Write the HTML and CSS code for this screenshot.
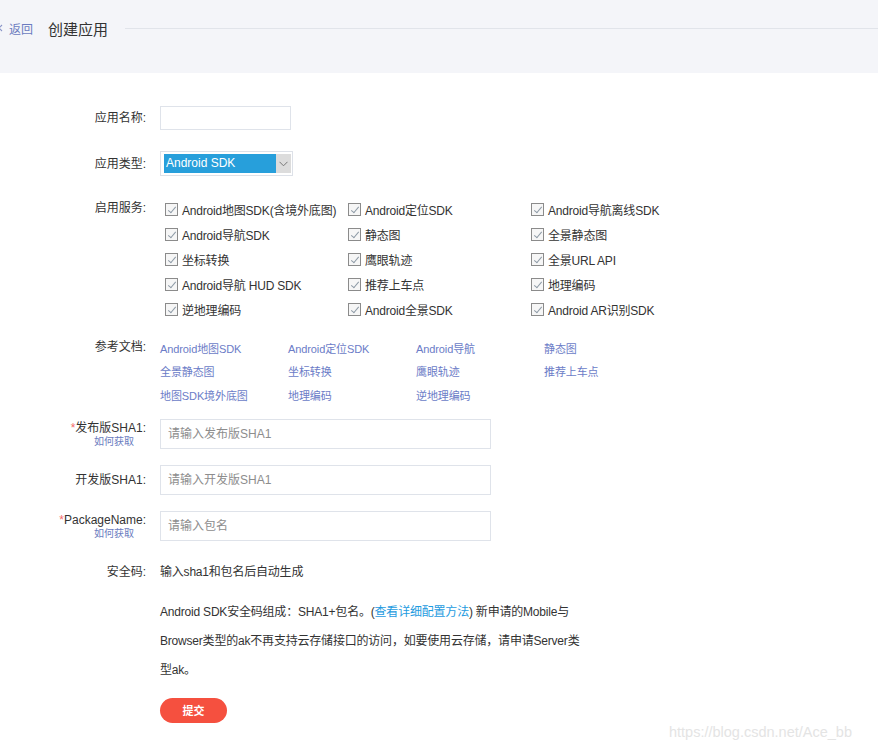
FILE: index.html
```html
<!DOCTYPE html>
<html lang="zh-CN">
<head>
<meta charset="utf-8">
<title>创建应用</title>
<link rel="stylesheet" href="styles.css">
</head>
<body>
<div class="top">
  <div class="crumb">
    <svg class="back-ico" width="3" height="10" viewBox="0 0 3 10"><path d="M2 2 L-1 5 L2 8" fill="none" stroke="#8a95c8" stroke-width="1.1"/></svg>
    <a class="back">返回</a>
    <h1 class="title">创建应用</h1>
    <div class="rule"></div>
  </div>
</div>

<form class="form">
  <div class="row r-name">
    <div class="lbl">应用名称:</div>
    <div class="field"><input class="txt txt-s" type="text"></div>
  </div>

  <div class="row r-type">
    <div class="lbl">应用类型:</div>
    <div class="field">
      <div class="select"><span class="sel-val">Android SDK</span><span class="sel-arrow"><svg width="9" height="6" viewBox="0 0 9 6"><path d="M0.5 0.8 L4.5 4.8 L8.5 0.8" fill="none" stroke="#777" stroke-width="1"/></svg></span></div>
    </div>
  </div>

  <div class="row r-svc">
    <div class="lbl lbl-top">启用服务:</div>
    <div class="field svc-grid">
      <label class="cb"><span class="box"></span>Android地图SDK(含境外底图)</label>
      <label class="cb"><span class="box"></span>Android定位SDK</label>
      <label class="cb"><span class="box"></span>Android导航离线SDK</label>
      <label class="cb"><span class="box"></span>Android导航SDK</label>
      <label class="cb"><span class="box"></span>静态图</label>
      <label class="cb"><span class="box"></span>全景静态图</label>
      <label class="cb"><span class="box"></span>坐标转换</label>
      <label class="cb"><span class="box"></span>鹰眼轨迹</label>
      <label class="cb"><span class="box"></span>全景URL API</label>
      <label class="cb"><span class="box"></span>Android导航 HUD SDK</label>
      <label class="cb"><span class="box"></span>推荐上车点</label>
      <label class="cb"><span class="box"></span>地理编码</label>
      <label class="cb"><span class="box"></span>逆地理编码</label>
      <label class="cb"><span class="box"></span>Android全景SDK</label>
      <label class="cb"><span class="box"></span>Android AR识别SDK</label>
    </div>
  </div>

  <div class="row r-doc">
    <div class="lbl lbl-top">参考文档:</div>
    <div class="field doc-grid">
      <a class="doc">Android地图SDK</a>
      <a class="doc">Android定位SDK</a>
      <a class="doc">Android导航</a>
      <a class="doc">静态图</a>
      <a class="doc">全景静态图</a>
      <a class="doc">坐标转换</a>
      <a class="doc">鹰眼轨迹</a>
      <a class="doc">推荐上车点</a>
      <a class="doc">地图SDK境外底图</a>
      <a class="doc">地理编码</a>
      <a class="doc">逆地理编码</a>
    </div>
  </div>

  <div class="row r-sha">
    <div class="lbl"><div><span class="req">*</span>发布版SHA1:</div><a class="how">如何获取</a></div>
    <div class="field"><input class="txt txt-l" type="text" placeholder="请输入发布版SHA1"></div>
  </div>

  <div class="row r-sha">
    <div class="lbl">开发版SHA1:</div>
    <div class="field"><input class="txt txt-l" type="text" placeholder="请输入开发版SHA1"></div>
  </div>

  <div class="row r-pkg">
    <div class="lbl"><div><span class="req">*</span>PackageName:</div><a class="how">如何获取</a></div>
    <div class="field"><input class="txt txt-l" type="text" placeholder="请输入包名"></div>
  </div>

  <div class="row r-code">
    <div class="lbl">安全码:</div>
    <div class="field auto">输入sha1和包名后自动生成</div>
  </div>

  <div class="row r-note">
    <div class="lbl"></div>
    <p class="field note"><span>Android SDK安全码组成：SHA1+包名。(</span><a class="cfg">查看详细配置方法</a><span>) 新申请的Mobile与</span><span>Browser类型的ak不再支持云存储接口的访问，如要使用云存储，请申请Server类型ak。</span></p>
  </div>

  <div class="row r-btn">
    <div class="lbl"></div>
    <div class="field"><button class="submit" type="button">提交</button></div>
  </div>
</form>

<div class="watermark">https://blog.csdn.net/Ace_bb</div>
</body>
</html>
```

FILE: styles.css
```css
* { box-sizing: border-box; }

html, body {
  margin: 0;
  padding: 0;
  background: #fff;
}

body {
  font-family: "Liberation Sans", Arial, "Noto Sans CJK SC", sans-serif;
  font-size: 12px;
  color: #333;
  width: 878px;
  height: 750px;
  overflow: hidden;
  position: relative;
}

a { text-decoration: none; cursor: pointer; }

.top {
  height: 73px;
  background: #f4f5f9;
}

.crumb {
  height: 56px;
  display: flex;
  align-items: center;
}

.back-ico {
  display: block;
  width: 3px;
  height: 10px;
  margin-right: 6px;
}

.back {
  color: #6b7cc0;
  font-size: 12px;
}

.title {
  margin: 0 0 0 15px;
  font-size: 15px;
  font-weight: normal;
  color: #333;
}

.rule {
  flex: 1;
  height: 1px;
  background: #e1e4ea;
  margin-left: 17px;
}

.form {
  padding-top: 33px;
  display: flex;
  flex-direction: column;
}

.row {
  display: grid;
  grid-template-columns: 146px 1fr;
  column-gap: 14px;
  align-items: center;
}

.lbl {
  text-align: right;
  color: #333;
  line-height: 16px;
}

.lbl-top { align-self: start; }

.req { color: #f56c6c; }

.how {
  display: block;
  font-size: 10px;
  line-height: 12px;
  color: #6b7cc0;
  padding-right: 12px;
}

.field { min-width: 0; }

.txt {
  display: block;
  border: 1px solid #dfe3ea;
  background: #fff;
  font-family: "Liberation Sans", Arial, "Noto Sans CJK SC", sans-serif;
  font-size: 12px;
  color: #333;
  padding: 0 7px;
  outline: none;
}

.txt::placeholder { color: #8d8d8d; }

.txt-s { width: 131px; height: 24px; }
.txt-l { width: 331px; height: 30px; }

.r-name { margin-bottom: 21px; }
.r-type { margin-bottom: 21px; }

.select {
  width: 133px;
  height: 25px;
  border: 1px solid #dde1e8;
  padding: 2px 1px 2px 3px;
  display: flex;
}

.sel-val {
  flex: 1;
  background: #279fdb;
  color: #fff;
  font-size: 12px;
  line-height: 19px;
  padding-left: 2px;
}

.sel-arrow {
  width: 15px;
  background: #dcdcdc;
  display: flex;
  align-items: center;
  justify-content: center;
}

.r-svc { margin-bottom: 14px; align-items: start; }
.r-svc .lbl { line-height: 25px; margin-top: -1px; }

.svc-grid {
  display: grid;
  grid-template-columns: repeat(3, 183px);
  grid-auto-rows: 25px;
}

.cb {
  display: flex;
  align-items: center;
  padding-left: 5px;
  white-space: nowrap;
  color: #333;
  letter-spacing: -0.2px;
}

.box {
  width: 13px;
  height: 13px;
  border: 1px solid #8b8b8b;
  background: #f6f6f6;
  margin-right: 4px;
  position: relative;
  flex: none;
}

.box::after {
  content: "";
  position: absolute;
  left: 3.5px;
  top: 1px;
  width: 3px;
  height: 7px;
  border-right: 1px solid #8d9aa6;
  border-bottom: 1px solid #8d9aa6;
  transform: rotate(40deg);
}

.r-doc { margin-bottom: 12px; align-items: start; }
.r-doc .lbl { line-height: 23px; }

.doc-grid {
  display: grid;
  grid-template-columns: repeat(4, 128px);
  grid-auto-rows: 23.5px;
  align-items: center;
}

.doc {
  font-size: 11px;
  color: #6b7cc7;
  white-space: nowrap;
  letter-spacing: -0.1px;
}

.r-sha { margin-bottom: 16px; }
.r-pkg { margin-bottom: 21px; }

.r-code { line-height: 20px; margin-bottom: 16px; }

.auto { letter-spacing: -0.2px; }

.note {
  margin: 0;
  width: 420px;
  line-height: 29px;
  color: #333;
  letter-spacing: -0.2px;
}

.cfg { color: #1e9be0; }

.r-btn { margin-top: 13px; }

.submit {
  display: block;
  width: 67px;
  height: 25px;
  border: none;
  border-radius: 13px;
  background: #f5503f;
  color: #fff;
  font-family: "Liberation Sans", Arial, "Noto Sans CJK SC", sans-serif;
  font-size: 11px;
  font-weight: bold;
  padding: 0;
}

.watermark {
  position: absolute;
  left: 669px;
  top: 723px;
  font-size: 14.5px;
  color: #e4e4e4;
  white-space: nowrap;
  line-height: 18px;
}
```
